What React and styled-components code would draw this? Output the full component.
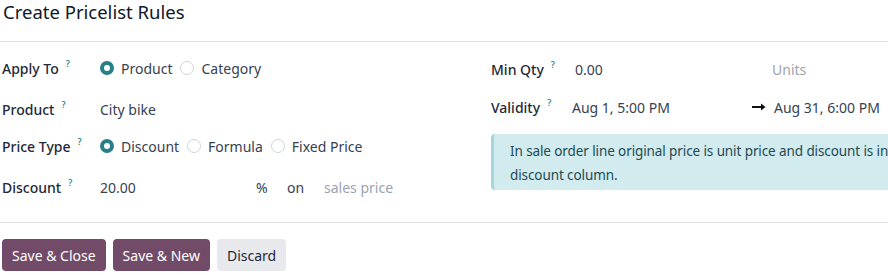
import React from 'react';
import styled, { createGlobalStyle } from 'styled-components';

const GlobalStyle = createGlobalStyle`
  html, body {
    margin: 0;
    padding: 0;
    background: #fff;
    overflow: hidden;
  }
  body {
    font-family: 'Noto Sans', 'Open Sans', sans-serif;
    color: #212529;
    font-size: 14px;
  }
`;

const Dialog = styled.div`
  width: 905px;
`;

const Header = styled.div`
  height: 42px;
  border-bottom: 1px solid #dee2e6;
  padding-left: 3px;
  box-sizing: border-box;
`;

const Title = styled.h4`
  margin: 0;
  font-size: 18.5px;
  font-weight: 400;
  line-height: 24px;
  color: #111827;
`;

const Body = styled.div`
  display: grid;
  grid-template-columns: 470px 1fr;
  gap: 19px;
  padding: 8px 0 0 2px;
  height: 181px;
  box-sizing: border-box;
  border-bottom: 1px solid #dee2e6;
`;

const Column = styled.div`
  display: flex;
  flex-direction: column;
  gap: ${(p) => p.$gap || 0}px;
  padding-top: ${(p) => p.$top || 0}px;
`;

const Row = styled.div`
  display: grid;
  grid-template-columns: ${(p) => p.$label}px 1fr;
  align-items: center;
  height: ${(p) => p.$h || 36}px;
`;

const Label = styled.div`
  font-weight: 500;
  color: #1f2937;
  display: flex;
  align-items: flex-start;
`;

const Help = styled.sup`
  color: #017e84;
  font-size: 9px;
  margin-left: 7px;
  position: relative;
  top: -2px;
`;

const Radios = styled.div`
  display: flex;
  align-items: center;
  gap: 8px;
`;

const RadioItem = styled.label`
  display: flex;
  align-items: center;
  gap: 7px;
  color: #374151;
`;

const RadioDot = styled.span`
  width: 14px;
  height: 14px;
  border-radius: 50%;
  box-sizing: border-box;
  background: #fff;
  border: ${(p) => (p.$on ? '4.5px solid #2a7f86' : '1px solid #cfd4da')};
`;

const Value = styled.div`
  color: #374151;
`;

const Inline = styled.div`
  display: flex;
  align-items: center;
`;

const Field = styled.span`
  width: ${(p) => p.$w}px;
  color: ${(p) => (p.$muted ? '#9ca3af' : '#374151')};
  flex: none;
`;

const Arrow = styled.span`
  width: 22px;
  display: inline-flex;
  align-items: center;
`;

const Alert = styled.div`
  margin-top: 7px;
  height: 56px;
  box-sizing: border-box;
  background: #d1ebef;
  border-left: 3px solid #a3d6dd;
  border-radius: 4px;
  padding: 5px 0 0 16px;
  line-height: 24px;
  font-size: 13.5px;
  letter-spacing: -0.1px;
  color: #1f4a52;
  width: 410px;
`;

const Footer = styled.div`
  display: flex;
  gap: 7px;
  padding: 16px 0 0 2px;
`;

const Button = styled.button`
  height: 32px;
  padding: 0 10px;
  border: none;
  border-radius: 4px;
  font-family: inherit;
  font-size: 14px;
  font-weight: 400;
  background: ${(p) => (p.$primary ? '#714b67' : '#e7e9ed')};
  color: ${(p) => (p.$primary ? '#fff' : '#1f2937')};
`;

function Radio({ on, children }) {
  return (
    <RadioItem>
      <RadioDot $on={on} />
      {children}
    </RadioItem>
  );
}

export default function App() {
  return (
    <Dialog>
      <GlobalStyle />
      <Header>
        <Title>Create Pricelist Rules</Title>
      </Header>
      <Body>
        <Column $gap={4}>
          <Row $label={98} $h={36}>
            <Label>Apply To<Help>?</Help></Label>
            <Radios>
              <Radio on>Product</Radio>
              <Radio>Category</Radio>
            </Radios>
          </Row>
          <Row $label={98} $h={38}>
            <Label>Product<Help>?</Help></Label>
            <Value>City bike</Value>
          </Row>
          <Row $label={98} $h={28}>
            <Label>Price Type<Help>?</Help></Label>
            <Radios>
              <Radio on>Discount</Radio>
              <Radio>Formula</Radio>
              <Radio>Fixed Price</Radio>
            </Radios>
          </Row>
          <Row $label={98} $h={46}>
            <Label>Discount<Help>?</Help></Label>
            <Inline>
              <Field $w={156}>20.00</Field>
              <Field $w={31}>%</Field>
              <Field $w={37}>on</Field>
              <Field $muted>sales price</Field>
            </Inline>
          </Row>
        </Column>
        <Column $top={1} $gap={2}>
          <Row $label={84}>
            <Label>Min Qty<Help>?</Help></Label>
            <Inline>
              <Field $w={197}>0.00</Field>
              <Field $muted>Units</Field>
            </Inline>
          </Row>
          <Row $label={81}>
            <Label>Validity<Help>?</Help></Label>
            <Inline>
              <Field $w={180}>Aug 1, 5:00 PM</Field>
              <Arrow>
                <svg width="14" height="8" viewBox="0 0 14 8">
                  <path d="M0 4h11" stroke="#111" strokeWidth="2" />
                  <path d="M9 0.5 13.5 4 9 7.5z" fill="#111" />
                </svg>
              </Arrow>
              <Field>Aug 31, 6:00 PM</Field>
            </Inline>
          </Row>
          <Alert>In sale order line original price is unit price and discount is in discount column.</Alert>
        </Column>
      </Body>
      <Footer>
        <Button $primary>Save &amp; Close</Button>
        <Button $primary>Save &amp; New</Button>
        <Button>Discard</Button>
      </Footer>
    </Dialog>
  );
}
